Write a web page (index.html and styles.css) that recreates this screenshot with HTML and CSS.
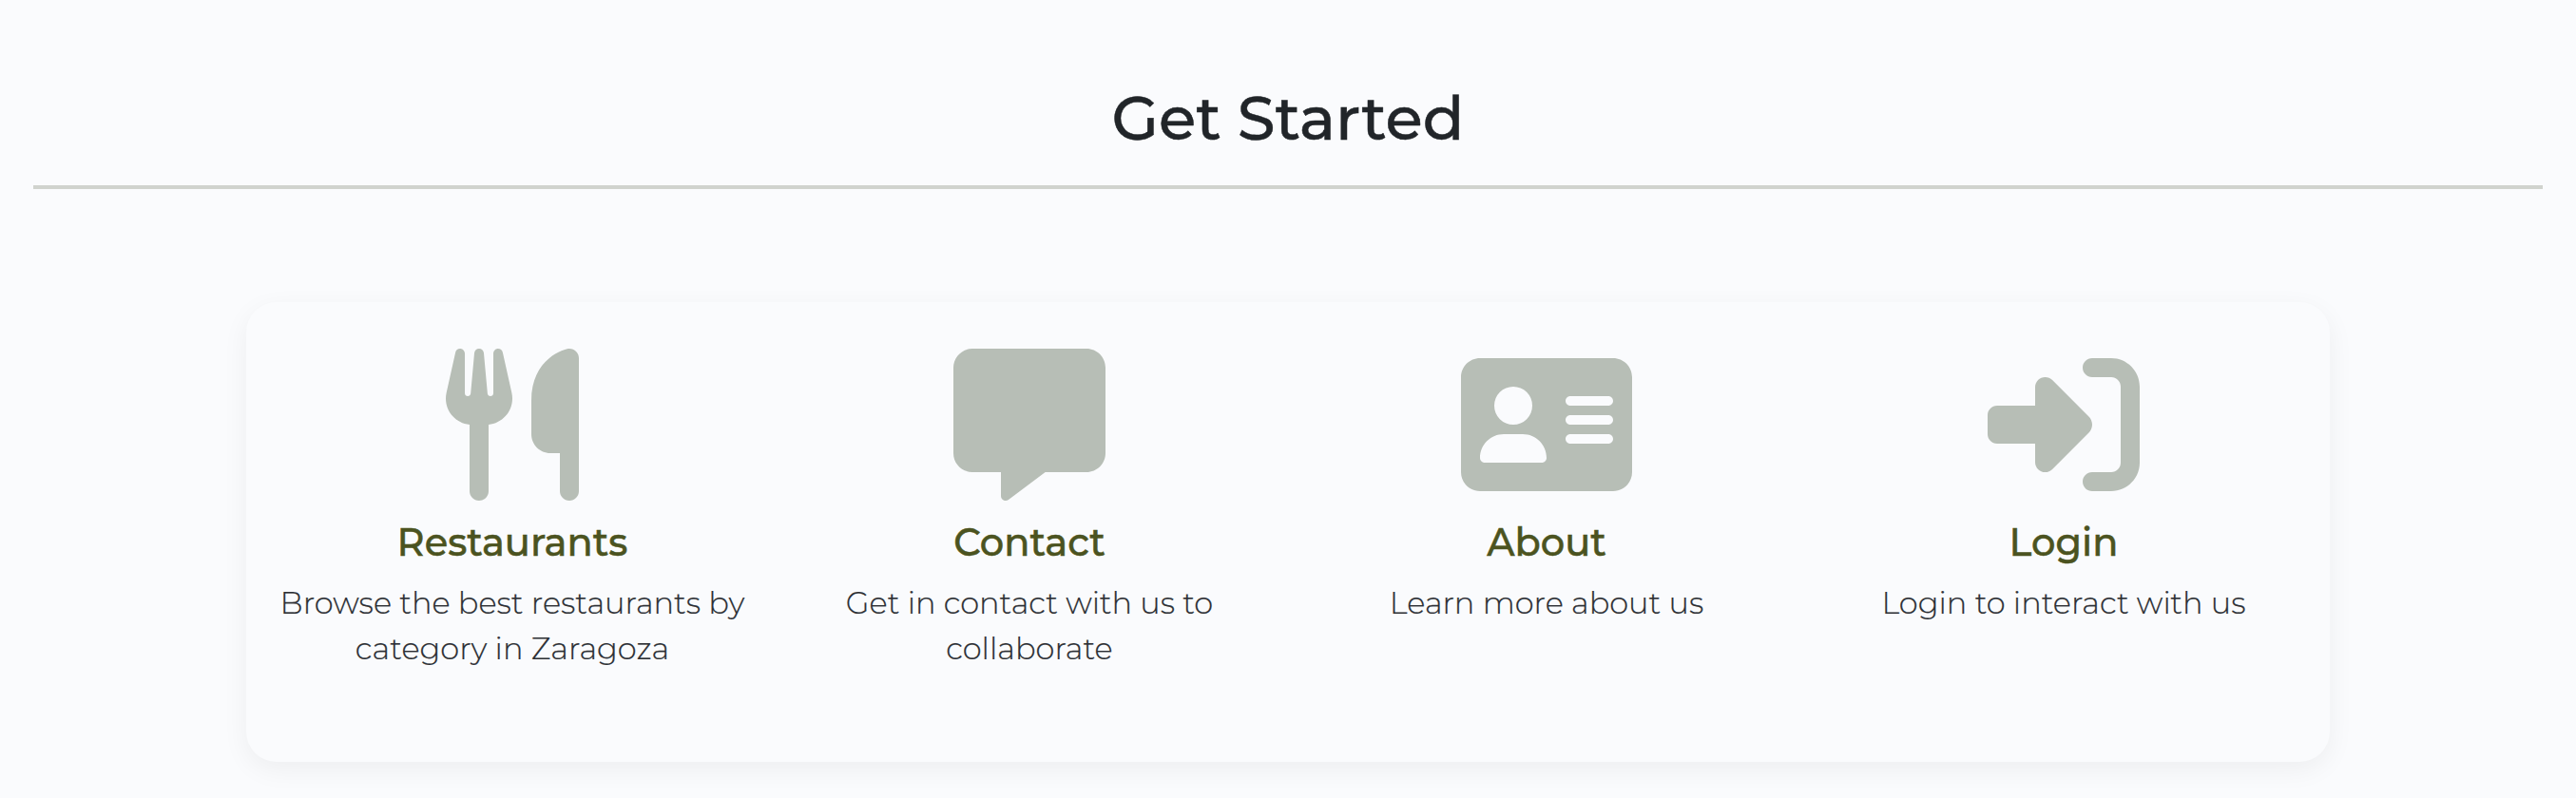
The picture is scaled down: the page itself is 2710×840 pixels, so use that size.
FILE: index.html
```html
<!DOCTYPE html>
<html lang="en">
<head>
<meta charset="utf-8">
<title>Get Started</title>
<link rel="stylesheet" href="styles.css">
</head>
<body>
<main class="page">
  <h1 class="page-title">Get Started</h1>
  <hr class="divider">
  <section class="card">
    <a class="item">
      <svg class="icon" viewBox="0 0 448 512" width="140" height="160"><path d="M416 0C400 0 288 32 288 176V288c0 35.3 28.7 64 64 64h32V480c0 17.7 14.3 32 32 32s32-14.3 32-32V352 240 32c0-17.7-14.3-32-32-32zM64 16C64 7.8 57.9 1 49.7 .1S34.2 4.6 32.4 12.5L2.1 148.8C.7 155.1 0 161.5 0 167.9c0 45.9 35.1 83.6 80 87.7V480c0 17.7 14.3 32 32 32s32-14.3 32-32V255.6c44.9-4.1 80-41.8 80-87.7c0-6.4-.7-12.8-2.1-19.1L191.6 12.5c-1.8-8-9.3-13.3-17.4-12.4S160 7.8 160 16V150.2c0 5.4-4.4 9.8-9.8 9.8c-5.1 0-9.3-3.9-9.8-9L127.9 14.6C127.2 6.3 120.3 0 112 0s-15.2 6.3-15.9 14.6L83.7 151c-.5 5.1-4.7 9-9.8 9c-5.4 0-9.8-4.4-9.8-9.8V16z"/></svg>
      <h2 class="item-title">Restaurants</h2>
      <p class="item-text">Browse the best restaurants by category in Zaragoza</p>
    </a>
    <a class="item">
      <svg class="icon" viewBox="0 0 512 512" width="160" height="160"><path d="M64 0C28.7 0 0 28.7 0 64V352c0 35.3 28.7 64 64 64h96v80c0 6.1 3.4 11.6 8.8 14.3s11.9 2.1 16.8-1.5L309.3 416H448c35.3 0 64-28.7 64-64V64c0-35.3-28.7-64-64-64H64z"/></svg>
      <h2 class="item-title">Contact</h2>
      <p class="item-text">Get in contact with us to<br>collaborate</p>
    </a>
    <a class="item">
      <svg class="icon" viewBox="0 0 576 512" width="180" height="160"><path fill-rule="evenodd" d="M64 32C28.7 32 0 60.7 0 96V416c0 35.3 28.7 64 64 64H512c35.3 0 64-28.7 64-64V96c0-35.3-28.7-64-64-64H64zm80 256h64c44.2 0 80 35.8 80 80c0 8.8-7.2 16-16 16H80c-8.8 0-16-7.2-16-16c0-44.2 35.8-80 80-80zm-32-96a64 64 0 1 1 128 0 64 64 0 1 1 -128 0zm256-32H496c8.8 0 16 7.2 16 16s-7.2 16-16 16H368c-8.8 0-16-7.2-16-16s7.2-16 16-16zm0 64H496c8.8 0 16 7.2 16 16s-7.2 16-16 16H368c-8.8 0-16-7.2-16-16s7.2-16 16-16zm0 64H496c8.8 0 16 7.2 16 16s-7.2 16-16 16H368c-8.8 0-16-7.2-16-16s7.2-16 16-16z"/></svg>
      <h2 class="item-title">About</h2>
      <p class="item-text">Learn more about us</p>
    </a>
    <a class="item">
      <svg class="icon" viewBox="0 0 512 512" width="160" height="160"><path d="M217.9 105.9L340.7 228.7c7.2 7.2 11.3 17.1 11.3 27.3s-4.1 20.1-11.3 27.3L217.9 406.1c-6.4 6.4-15 9.9-24 9.9c-18.7 0-33.9-15.2-33.9-33.9l0-62.1L32 320c-17.7 0-32-14.3-32-32l0-64c0-17.7 14.3-32 32-32l128 0 0-62.1c0-18.7 15.2-33.9 33.9-33.9c9 0 17.6 3.6 24 9.9zM352 416l64 0c17.7 0 32-14.3 32-32l0-256c0-17.7-14.3-32-32-32l-64 0c-17.7 0-32-14.3-32-32s14.3-32 32-32l64 0c53 0 96 43 96 96l0 256c0 53-43 96-96 96l-64 0c-17.7 0-32-14.3-32-32s14.3-32 32-32z"/></svg>
      <h2 class="item-title">Login</h2>
      <p class="item-text">Login to interact with us</p>
    </a>
  </section>
</main>
</body>
</html>
```
FILE: styles.css
```css
* { box-sizing: border-box; }

body {
  margin: 0;
  background: #fafbfd;
  color: #212529;
  font-family: Montserrat, Inter, sans-serif;
}

.page {
  height: 840px;
  padding: 86px 35px 0;
  overflow: hidden;
}

.page-title {
  margin: 0;
  font-size: 64px;
  line-height: 77px;
  font-weight: 500;
  text-align: center;
  -webkit-text-stroke: 0.5px #212529;
}

.divider {
  height: 4px;
  margin: 32px 0 119px;
  border: 0;
  background: #d0d3ce;
}

.card {
  display: grid;
  grid-template-columns: repeat(4, 544px);
  justify-content: center;
  width: 2192px;
  height: 484px;
  margin: 0 auto;
  padding-top: 49px;
  border-radius: 32px;
  background: #fafbfd;
  box-shadow: 0 8px 28px rgba(0, 0, 0, 0.055);
}

.item {
  display: flex;
  flex-direction: column;
  align-items: center;
  padding: 0 24px;
}

.icon {
  display: block;
  fill: #b7beb6;
}

.item-title {
  margin: 20px 0 16px;
  color: #4b5320;
  font-size: 40px;
  line-height: 48px;
  font-weight: 500;
  -webkit-text-stroke: 0.5px #4b5320;
}

.item-text {
  margin: 0;
  color: #2c2f34;
  font-size: 32px;
  line-height: 48px;
  font-weight: 300;
  text-align: center;
  -webkit-text-stroke: 0.2px #2c2f34;
}
```
